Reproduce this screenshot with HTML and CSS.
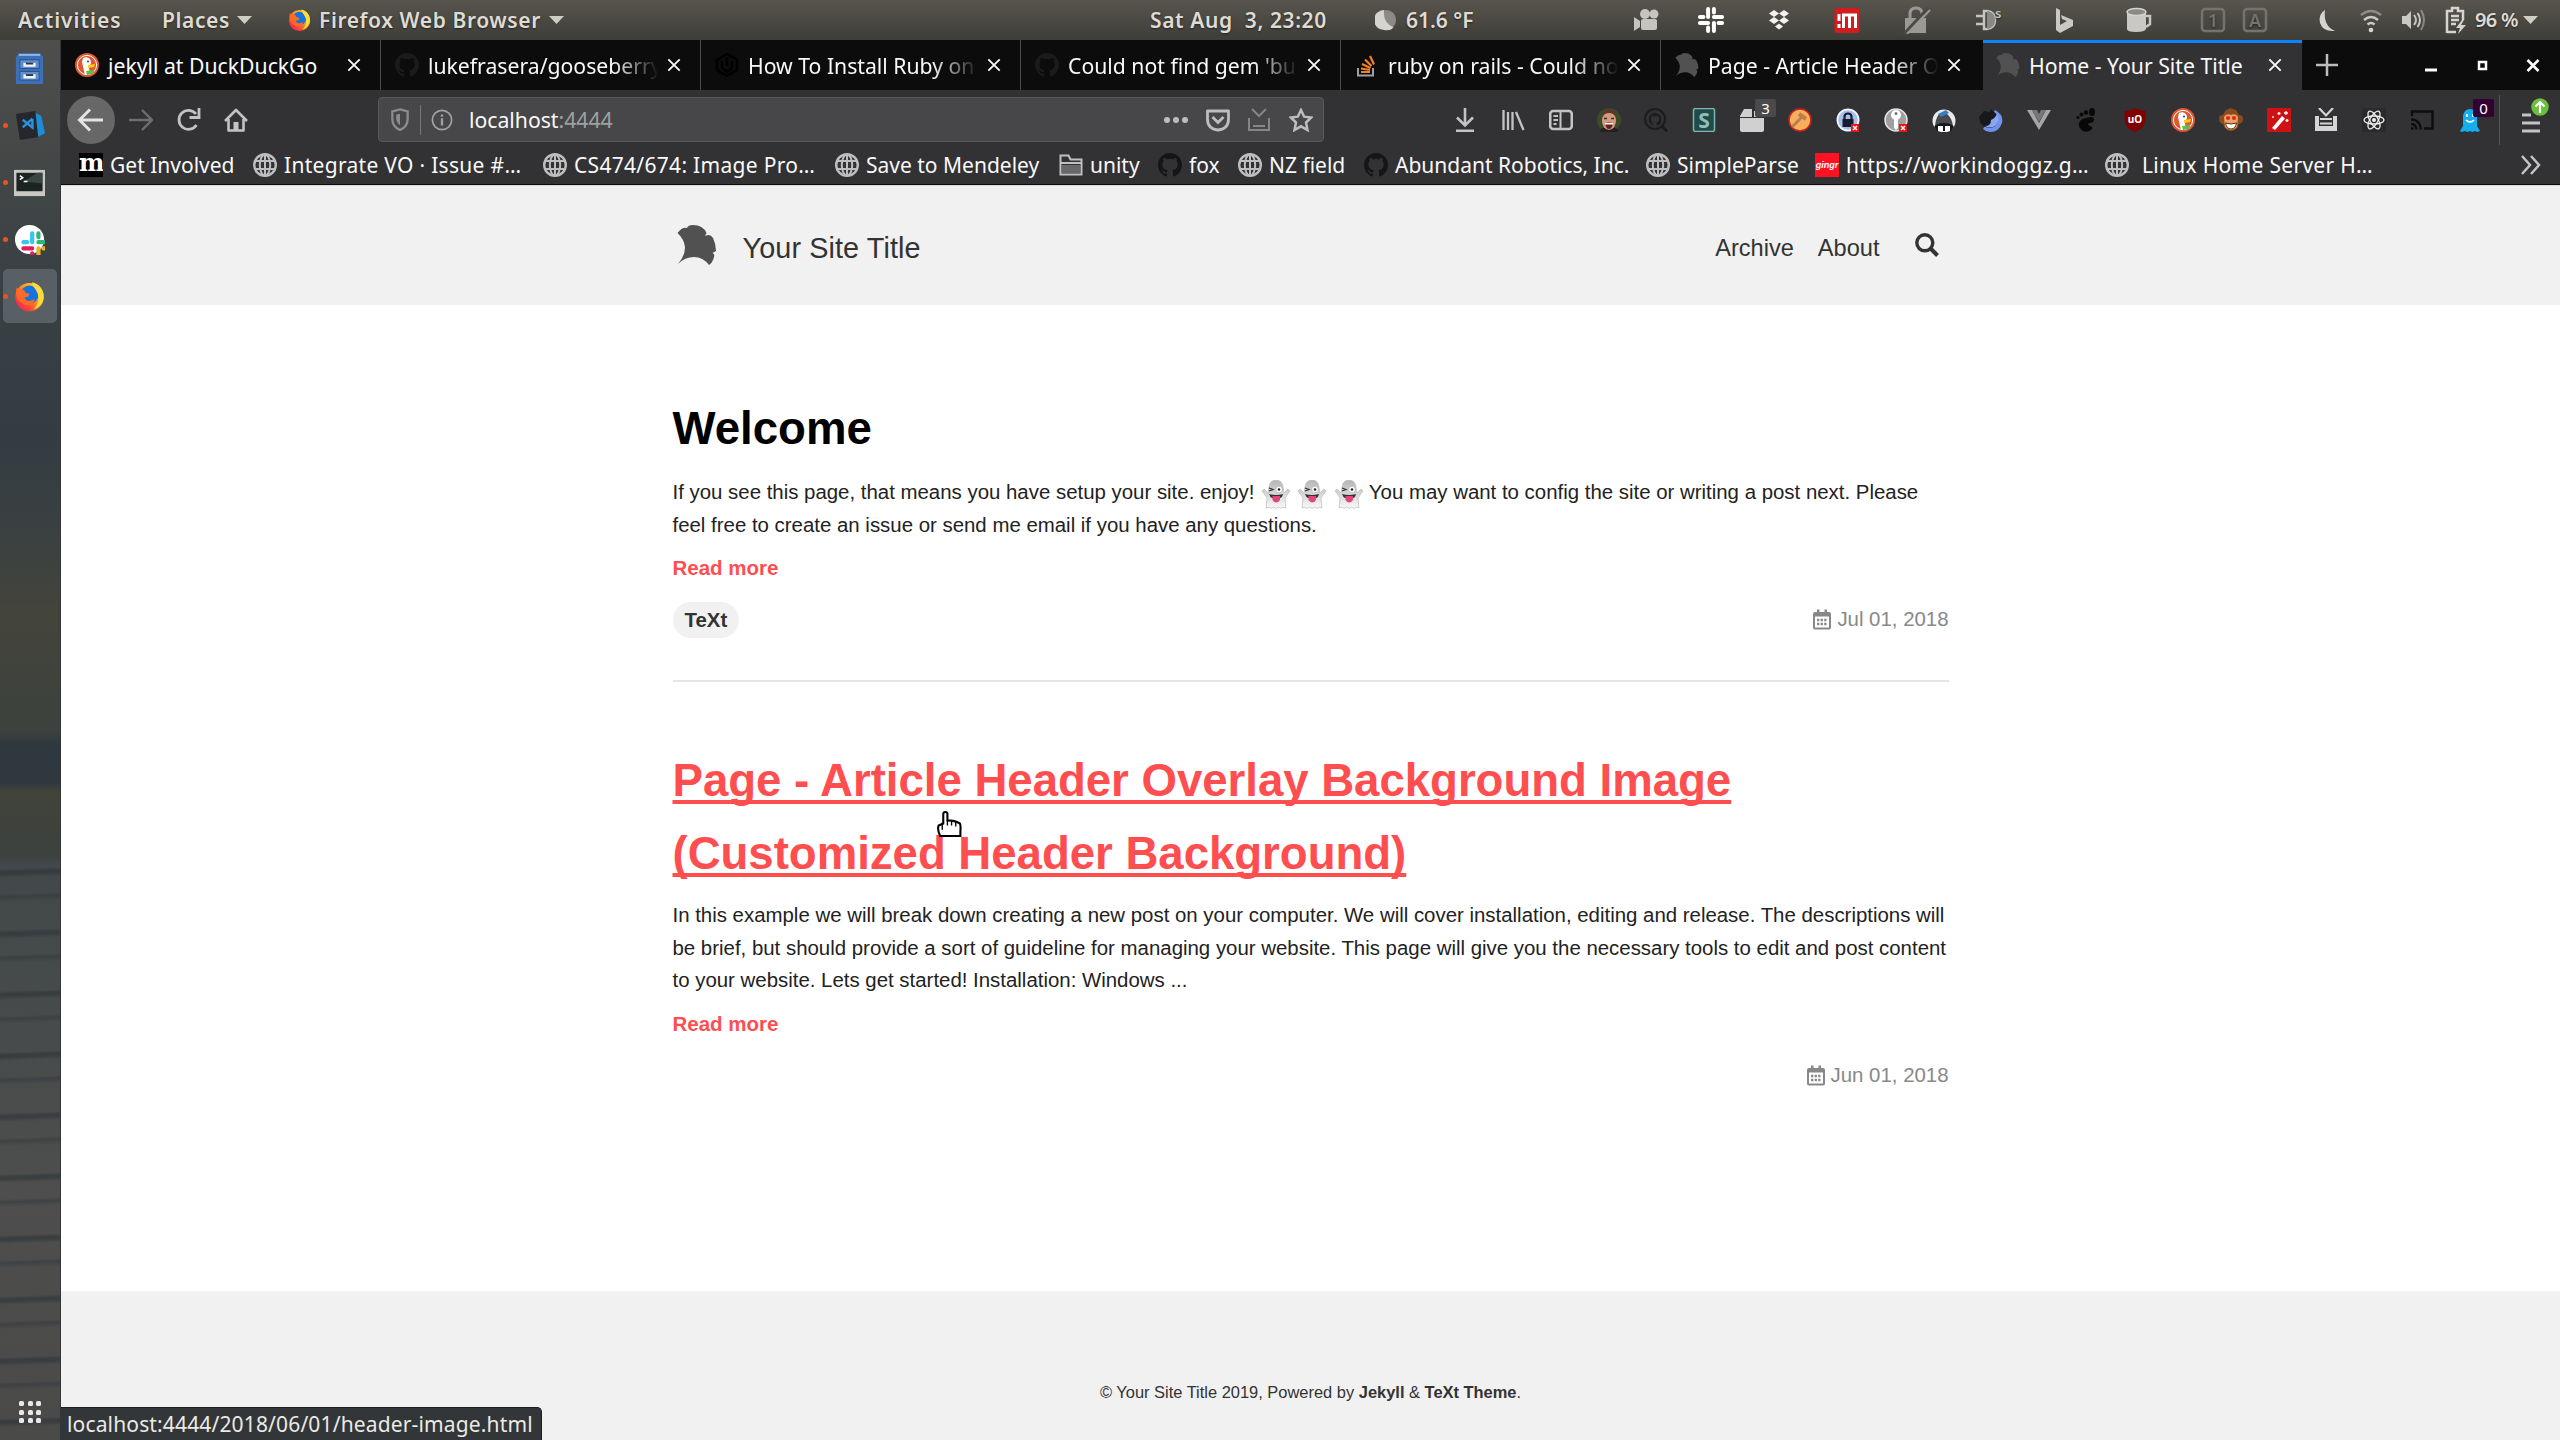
FILE: index.html
```html
<!DOCTYPE html>
<html lang="en">
<head>
<meta charset="utf-8">
<title>Home - Your Site Title</title>
<link rel="stylesheet" href="styles.css">
</head>
<body>
<svg class="defs" aria-hidden="true">
  <defs>
    <linearGradient id="ffx" x1="1" y1="0" x2="0" y2="1"><stop offset="0" stop-color="#fff44f"/><stop offset=".4" stop-color="#ff9a1e"/><stop offset=".75" stop-color="#ff3b3b"/><stop offset="1" stop-color="#e3138a"/></linearGradient>
    <linearGradient id="ghostg" x1="0" y1="0" x2="0" y2="1"><stop offset="0" stop-color="#b5b5b5"/><stop offset="1" stop-color="#fafafa"/></linearGradient>
    <symbol id="firefox" viewBox="0 0 24 24"><circle cx="12" cy="12.5" r="11" fill="url(#ffx)"/><circle cx="12" cy="10.5" r="7" fill="#1573dd"/><path d="M14 1c5 1 9 5 9 11 0 4-3 9-8 10 4-4 5-9 3-13-1-3-4-5-4-8z" fill="#ffdc3a"/><path d="M2 5l3 2c2-1 3 0 4 2l3 1-1 2-3 1c1 3 5 3 8 1-1 5-6 6-10 3-4-2-5-7-4-12z" fill="#ff6a26"/></symbol>
    <symbol id="ddg" viewBox="0 0 24 24"><circle cx="12" cy="12" r="12" fill="#de5833"/><circle cx="12" cy="12" r="9.6" fill="none" stroke="#fff" stroke-width="1"/><path d="M8 5c4-2 8 0 8 5l-2 5 1 7h-5L7 9z" fill="#fff"/><path d="M13 12l7-1-1 3-6 1z" fill="#fdd20a"/><circle cx="13" cy="8.5" r="1.1" fill="#2d4f8e"/><path d="M11 18l8-1v4l-7 1z" fill="#65bc46"/></symbol>
    <symbol id="github" viewBox="0 0 16 16"><path fill="currentColor" d="M8 0C3.58 0 0 3.58 0 8c0 3.54 2.29 6.53 5.47 7.59.4.07.55-.17.55-.38v-1.49c-2.01.37-2.53-.49-2.69-.94-.09-.23-.48-.94-.82-1.13-.28-.15-.68-.52-.01-.53.63-.01 1.08.58 1.23.82.72 1.21 1.87.87 2.33.66.07-.52.28-.87.51-1.07-1.78-.2-3.64-.89-3.64-3.95 0-.87.31-1.59.82-2.15-.08-.2-.36-1.02.08-2.12 0 0 .67-.21 2.2.82a7.6 7.6 0 014 0c1.53-1.04 2.2-.82 2.2-.82.44 1.1.16 1.92.08 2.12.51.56.82 1.27.82 2.15 0 3.07-1.87 3.75-3.65 3.95.29.25.54.73.54 1.48v2.2c0 .21.15.46.55.38A8 8 0 0016 8c0-4.42-3.58-8-8-8z"/></symbol>
    <symbol id="globe" viewBox="0 0 24 24"><g fill="none" stroke="#bebec0" stroke-width="2"><circle cx="12" cy="12" r="10.800" stroke-width="2.400"/><ellipse cx="12" cy="12" rx="5.200" ry="10.500"/><path d="M12 1v22M2.500 8h19M2.500 16h19"/></g></symbol>
    <symbol id="leaf" viewBox="0 0 40 40"><path fill="currentColor" d="M.5 8Q5 2 10 3Q11 0 16 0Q26 0 29.500 8L28 11Q33 8 36 13Q39 19 39 26L35.500 28Q38 29 37 32Q36 37 32 40Q26 32 17 32Q8 32 1 39Q8 31 8 22Q7 14 .5 8z"/></symbol>
    <symbol id="close" viewBox="0 0 16 16"><path d="M1.500 1.500l13 13M14.500 1.500l-13 13" stroke="#f9f9fa" stroke-width="2.200" fill="none"/></symbol>
    <symbol id="ghost" viewBox="0 0 30 30"><path d="M5 28l1-10-5-7 2-2 4 4 1-6q1-7 7-7t7 7l1 6 4-4 2 2-5 7 1 10-3-1-2 1.500-2.500-1.500-2.500 1.500-2.500-1.500-2.500 1.500-2-1.500z" fill="url(#ghostg)" stroke="#bbb" stroke-width=".7"/><circle cx="18" cy="9.500" r="3.300" fill="#fff" stroke="#888" stroke-width=".4"/><circle cx="18" cy="9.500" r="1.300" fill="#222"/><path d="M8 8l4 1.500-4 1.500" fill="none" stroke="#333" stroke-width="1.200"/><path d="M8 14q7 2 14 0-1 4-3 4h-8q-2-1-3-4z" fill="#333"/><path d="M11.500 16h7.500v4q-3.800 5-7.500 0z" fill="#e0457b"/></symbol>
    <symbol id="calendar" viewBox="0 0 18 20"><path fill="#888" fill-rule="evenodd" d="M4 0h2.500v2.500h5V0H14v2.500h2q2 0 2 2V18q0 2-2 2H2q-2 0-2-2V4.500q0-2 2-2h2zM2 7v11h14V7z"/><path stroke="#888" stroke-width="2.300" stroke-dasharray="2.300 1.300" d="M4 10.500h10M4 14.500h10"/></symbol>
    <symbol id="slackmark" viewBox="0 0 24 24"><g fill="none" stroke-width="3.400" stroke-linecap="round"><path d="M9.500 2.500v7M2.500 9.500h3" stroke="var(--a)"/><path d="M14.500 9.500h7M14.500 2.500v3" stroke="var(--b)"/><path d="M14.500 14.500v7M18.500 14.500h3" stroke="var(--c)"/><path d="M2.500 14.500h7M9.500 18.500v3" stroke="var(--d)"/></g></symbol>
  </defs>
</svg>

<header class="topbar">
  <span class="t-activities">Activities</span>
  <span>Places</span>
  <svg class="tri" viewBox="0 0 15 8"><path d="M0 0h15L7.500 8z"/></svg>
  <svg class="i23"><use href="#firefox"/></svg>
  <span class="t-app">Firefox Web Browser</span>
  <svg class="tri" viewBox="0 0 15 8"><path d="M0 0h15L7.500 8z"/></svg>
  <span class="t-clock">Sat Aug &nbsp;3, 23:20</span>
  <svg class="i22" viewBox="0 0 24 24"><circle cx="12" cy="12" r="11" fill="#8b8a85"/><path d="M10 1a11 11 0 100 22q8 1 10-3-12-6-10-19z" fill="#d5d4d0"/></svg>
  <span class="t-temp">61.6 °F</span>
  <svg class="i28" viewBox="0 0 28 28"><g fill="#c5c4c0"><circle cx="13" cy="8" r="5"/><circle cx="22" cy="8" r="4.500"/><rect x="9" y="13" width="16" height="11" rx="2"/><path d="M2 11l6 4v6l-6 4z"/></g></svg>
  <svg class="i28 slack-mono" viewBox="0 0 24 24"><use href="#slackmark"/></svg>
  <svg class="i28" viewBox="0 0 28 28"><path fill="#f2f2f0" d="M9 4l5 3.500L9 11 4 7.500zM19 4l5 3.500-5 3.500-5-3.500zM9 11l5 3.500L9 18l-5-3.500zM19 11l5 3.500-5 3.500-5-3.500zM14 17.500l4 3-4 3-4-3z"/></svg>
  <svg class="i28" viewBox="0 0 28 28"><rect x="1.500" y="2" width="25" height="25" rx="3" fill="#d31c1c"/><path d="M6 8v7M6 18v4M10.500 22V9h12v13M16.500 9v13" stroke="#fff" stroke-width="3" fill="none"/></svg>
  <svg class="i28" viewBox="0 0 28 28"><path d="M7 12V8q0-6 6-6t6 6v4" stroke="#9a9994" stroke-width="3" fill="none"/><path d="M2 12h21v15H2z" fill="#9a9994"/><path d="M1 28L25 2" stroke="#4c4a44" stroke-width="3"/><path d="M4 28L27 4" stroke="#9a9994" stroke-width="2"/></svg>
  <svg class="i28" viewBox="0 0 28 28"><path d="M9 5h3q8 1 8 9t-8 9H9zM1 10h7M1 18h7" stroke="#c5c4c0" stroke-width="2.500" fill="none"/><path d="M12 5q8 1 8 9t-8 9z" fill="#8a8984"/><text x="20" y="12" font-size="13" fill="#c5c4c0">s</text></svg>
  <svg class="i28" viewBox="0 0 28 28"><path d="M6 2l4 2v15l7-4-5-2-1-4 12 5v6L10 27l-4-3z" fill="#c9c8c4"/></svg>
  <svg class="i28" viewBox="0 0 28 28"><path d="M3 6v17q0 3 9 3t10-3V6z" fill="#c9c8c4"/><ellipse cx="12.500" cy="6" rx="9.500" ry="3.500" fill="#8a8984" stroke="#d5d4d0" stroke-width="1.500"/><path d="M22 10h4v8l-4 3" stroke="#c9c8c4" stroke-width="2.500" fill="none"/></svg>
  <svg class="i28 keylock" viewBox="0 0 28 28"><rect x="3" y="3" width="22" height="22" rx="3"/><text x="14" y="21" text-anchor="middle">1</text></svg>
  <svg class="i28 keylock" viewBox="0 0 28 28"><rect x="3" y="3" width="22" height="22" rx="3"/><text x="14" y="21" text-anchor="middle">A</text></svg>
  <svg class="i28" viewBox="0 0 28 28"><path d="M12 4q-7 4-5 13 3 9 15 8-12-5-10-21z" fill="#d5d4d0"/></svg>
  <svg class="i28" viewBox="0 0 28 28"><g fill="none" stroke="#c9c8c4" stroke-width="2.500"><path d="M4 9q10-8 20 0" opacity=".5"/><path d="M7 14q7-6 14 0"/><path d="M10.500 18.500q3.500-3 7 0"/></g><circle cx="14" cy="24" r="2.300" fill="#d5d4d0"/></svg>
  <svg class="i28" viewBox="0 0 28 28"><path d="M3 10h4l5-5v18l-5-5H3z" fill="#c9c8c4"/><g fill="none" stroke="#c9c8c4" stroke-width="2"><path d="M15 9q4 5 0 10"/><path d="M18.500 7q5 7 0 14"/><path d="M22 4q6 10 0 20" opacity=".5"/></g></svg>
  <svg class="i28" viewBox="0 0 28 28"><path d="M5 27V5h5V2h6v3h5v9M5 26h9M9 10h8M9 14h8M9 18h5" stroke="#d5d4d0" stroke-width="2.500" fill="none"/><path d="M20 14l-6 8h4l-2 6 8-9h-5l3-5z" fill="#d5d4d0"/></svg>
  <span class="t-batt">96 %</span>
  <svg class="tri" viewBox="0 0 15 8"><path d="M0 0h15L7.500 8z"/></svg>
</header>

<div class="desktop">
  <aside class="dock">
    <div class="dock-item"><svg viewBox="0 0 32 32"><path d="M2 4l3-4h22l3 4v28H2z" fill="#3f6fb5"/><path d="M5 2h22" stroke="#8fb5ea" stroke-width="2"/><path d="M6 7h20v9H6zM6 19h20v9H6z" fill="#5d8ed2" stroke="#2a4f8d"/><path d="M11 10v3h10v-3M11 22v3h10v-3" stroke="#f3f3f3" stroke-width="2.500" fill="#333"/></svg></div>
    <div class="dock-item running"><svg viewBox="0 0 32 32"><path d="M20 2l8 4 4 18-8 4z" fill="#1b8ddd"/><path d="M2 4l20-3 3 27-19 3z" fill="#25272c"/><path d="M19 9l-10 9M9 10l10 8V9" stroke="#2794df" stroke-width="2.500" fill="none"/></svg></div>
    <div class="dock-item running"><svg viewBox="0 0 32 32"><rect x="0" y="3" width="32" height="27" fill="#c9c7c3"/><rect x="2.500" y="6" width="27" height="19" fill="#1c2422"/><path d="M10 15L24 6h5v11z" fill="#3b4643"/><path d="M6 9l3 2-3 2M10 15h4" stroke="#fff" stroke-width="1.500" fill="none"/></svg></div>
    <div class="dock-item running"><svg viewBox="0 0 32 32"><circle cx="16" cy="16" r="15" fill="#fff"/><svg class="slack-color" x="6.500" y="6.500" width="19" height="19" viewBox="0 0 24 24"><use href="#slackmark"/></svg></svg></div>
    <div class="dock-item running current"><svg><use href="#firefox"/></svg></div>
    <div class="apps"><i></i><i></i><i></i><i></i><i></i><i></i><i></i><i></i><i></i></div>
  </aside>

  <section class="browser">
    <nav class="tabs">
      <div class="tab"><svg class="fav"><use href="#ddg"/></svg><span>jekyll at DuckDuckGo</span><svg class="x"><use href="#close"/></svg></div>
      <div class="tab"><svg class="fav dim"><use href="#github"/></svg><span>lukefrasera/gooseberry</span><svg class="x"><use href="#close"/></svg></div>
      <div class="tab"><svg class="fav" viewBox="0 0 24 24"><path d="M12 1l10 6v10l-10 6-10-6V7zM12 4v9M7 8v7l5 4 5-4V8" fill="none" stroke="#000" stroke-width="2.500"/></svg><span>How To Install Ruby on</span><svg class="x"><use href="#close"/></svg></div>
      <div class="tab"><svg class="fav dim"><use href="#github"/></svg><span>Could not find gem 'bun</span><svg class="x"><use href="#close"/></svg></div>
      <div class="tab so"><svg class="fav" viewBox="0 0 24 24"><path d="M3 15v7.500h15V15" stroke="#9aa0a6" stroke-width="2" fill="none"/><path d="M6 19h9M6 15.500l9 1.500M7 11l8.500 4M10 6.500l6.500 6.500M15 3l4 8.500" stroke="#f48024" stroke-width="2.200"/></svg><span>ruby on rails - Could not</span><svg class="x"><use href="#close"/></svg></div>
      <div class="tab"><svg class="fav leaf"><use href="#leaf"/></svg><span>Page - Article Header O</span><svg class="x"><use href="#close"/></svg></div>
      <div class="tab active"><svg class="fav leaf"><use href="#leaf"/></svg><span>Home - Your Site Title</span><svg class="x"><use href="#close"/></svg></div>
      <svg class="newtab" viewBox="0 0 22 22"><path d="M11 0v22M0 11h22" stroke="#bcbcbd" stroke-width="2.500"/></svg>
      <div class="winctl">
        <svg viewBox="0 0 14 14"><path d="M1 12h12" stroke="#fff" stroke-width="3"/></svg>
        <svg viewBox="0 0 14 14"><path d="M4 4h7v7H4z" stroke="#fff" stroke-width="2.500" fill="none"/></svg>
        <svg viewBox="0 0 14 14"><path d="M1.500 2l11 11M12.500 2l-11 11" stroke="#fff" stroke-width="2.600"/></svg>
      </div>
    </nav>

    <div class="toolbar">
      <div class="navbtns">
        <svg class="back" viewBox="0 0 48 48"><circle cx="24" cy="24" r="24" fill="#676767"/><path d="M36 24H13M23 13.500L12.500 24 23 34.500" stroke="#e3e3e3" stroke-width="3" fill="none"/></svg>
        <svg viewBox="0 0 24 24"><path d="M0 12h23M13 2l10 10-10 10" stroke="#6e6e70" stroke-width="2.400" fill="none"/></svg>
        <svg viewBox="0 0 24 24"><path d="M19.500 17A9.500 9.500 0 1119 6" stroke="#c3c3c4" stroke-width="2.800" fill="none"/><path d="M22 0v9.500h-9.500" fill="none" stroke="#c3c3c4" stroke-width="2.800"/></svg>
        <svg viewBox="0 0 24 24"><path d="M1 13L12 2l11 11M4.500 11v11.500h15V11" stroke="#c3c3c4" stroke-width="2.600" fill="none" stroke-linejoin="round"/><path d="M9.500 23v-9h5v9z" fill="#c3c3c4"/></svg>
      </div>
      <div class="urlbar">
        <svg class="shield" viewBox="0 0 20 24"><path d="M10 1.500l8 2v8q0 8-8 11.500-8-3.500-8-11.500v-8z" fill="none" stroke="#8c8c8e" stroke-width="2.400"/><path d="M10 6v12q-4-3-4-7V7z" fill="#8c8c8e"/></svg>
        <i class="vsep"></i>
        <svg class="info" viewBox="0 0 24 24"><circle cx="12" cy="12" r="10.500" fill="none" stroke="#a2a2a4" stroke-width="1.800"/><path d="M12 10v8M12 6v2.500" stroke="#a2a2a4" stroke-width="2.500"/></svg>
        <span class="url">localhost<em>:4444</em></span>
        <svg class="act" viewBox="0 0 24 24"><g fill="#bdbdbe"><circle cx="3" cy="12" r="3"/><circle cx="12" cy="12" r="3"/><circle cx="21" cy="12" r="3"/></g></svg>
        <svg class="act" viewBox="0 0 24 24"><path d="M1.500 3h21v8q0 10-10.500 11Q1.500 21 1.500 11z" fill="none" stroke="#bdbdbe" stroke-width="2.800" stroke-linejoin="round"/><path d="M6.500 9l5.500 5.500L17.500 9" fill="none" stroke="#bdbdbe" stroke-width="2.800"/></svg>
        <svg class="act" viewBox="0 0 24 24"><path d="M5 1l7 7 7-7M2 10v12h20V10M6 18h12" fill="none" stroke="#858587" stroke-width="2"/></svg>
        <svg class="act" viewBox="0 0 24 24"><path d="M12 2l3.200 6.700 7 .8-5.200 5 1.500 7.500-6.500-3.700L5.500 22 7 14.500l-5.200-5 7-.8z" fill="none" stroke="#bdbdbe" stroke-width="2.500"/></svg>
      </div>
      <div class="exts">
        <svg viewBox="0 0 24 24"><path d="M12 0v17M4 9.500l8 8 8-8M3 22.700h18" fill="none" stroke="#c3c3c4" stroke-width="2.600"/></svg>
        <svg viewBox="0 0 24 24"><path d="M2.500 2v20M7 4v18M11.500 4v18M15 4l7.500 18" fill="none" stroke="#c3c3c4" stroke-width="2.300"/></svg>
        <svg viewBox="0 0 24 24"><rect x="1.200" y="3" width="21.600" height="18" rx="3" fill="none" stroke="#c3c3c4" stroke-width="2.600"/><path d="M11.500 3v18M4.500 8h4.500M4.500 12h4.500M4.500 16h3" stroke="#c3c3c4" stroke-width="2"/></svg>
        <svg viewBox="0 0 24 24"><circle cx="12" cy="12" r="12" fill="#3d4a2b"/><path d="M3 24q0-4 6-5h6q7 1 6 5z" fill="#27221f"/><ellipse cx="12" cy="12.500" rx="7" ry="9.500" fill="#d39a80"/><path d="M5 10q0-9 7-9t7 9q-2-5-7-5t-7 5z" fill="#5b3826"/><path d="M8 15q4-1 8 0-1 6-4 6t-4-6z" fill="#6b1c1c"/><path d="M8 15h8v1.500H8z" fill="#fff"/><path d="M7 10.500h3M14 10.500h3" stroke="#333" stroke-width="1.300"/></svg>
        <svg class="ghs" viewBox="0 0 24 24"><circle cx="11" cy="11" r="10" fill="none" stroke="#1c1c1d" stroke-width="2"/><path d="M18 18l5 5.500" stroke="#1c1c1d" stroke-width="3"/><svg x="4.500" y="5" width="13" height="13"><use href="#github"/></svg></svg>
        <svg viewBox="0 0 24 24"><rect x="1.500" y=".5" width="21" height="23" rx="2" fill="#1f4b4b" stroke="#7fb3ab" stroke-width="1.500"/><text x="12" y="20" text-anchor="middle" font-size="21" font-weight="700" fill="#8fc1b7">S</text></svg>
        <div class="badged"><svg viewBox="0 0 24 24"><path d="M0 10h24v12q0 2-2 2H2q-2 0-2-2zM4 1h8v8H0V8zM14 3h7l3 5v1H14z" fill="#d0d0d0"/></svg><b>3</b></div>
        <svg viewBox="0 0 24 24"><circle cx="12" cy="12" r="11" fill="#f8ae5c" stroke="#c9231b" stroke-width="1.600"/><path d="M4 19L15 8" stroke="#b87f4a" stroke-width="3"/><path d="M11 6l7 5" stroke="#b87f4a" stroke-width="4"/></svg>
        <svg viewBox="0 0 24 24"><circle cx="12" cy="12" r="11.500" fill="#a9bfe8"/><circle cx="12" cy="12" r="10.500" fill="none" stroke="#f5f7fc" stroke-width="1.500"/><path d="M8.500 12V9q0-3.500 3.500-3.500T15.500 9v3" stroke="#141b33" stroke-width="2.200" fill="none"/><path d="M6.500 11h11v8h-11z" fill="#141b33"/><path d="M15 16h8v8h-8z" fill="#e11"/><path d="M17 18l4 4M21 18l-4 4" stroke="#fff" stroke-width="1.500"/></svg>
        <svg viewBox="0 0 24 24"><circle cx="12" cy="12" r="11" fill="#9f9f9f" stroke="#e2e2e2" stroke-width="1.500"/><circle cx="12" cy="7" r="5" fill="#fff"/><circle cx="12" cy="5.500" r="1.500" fill="#777"/><path d="M10 11h4v9l-2 2-2-2z" fill="#fff"/><path d="M15 16h8v8h-8z" fill="#e11"/><path d="M17 18l4 4M21 18l-4 4" stroke="#fff" stroke-width="1.500"/></svg>
        <svg viewBox="0 0 24 24"><circle cx="12" cy="13" r="11.500" fill="#e9eaeb"/><path d="M3 18Q4 7 9 5l6 1q5 4 6 12z" fill="#474b50"/><path d="M6 6l8-4 3 3-8 4z" fill="#3b7bbf"/><path d="M2 19q3-4 10-4t10 4l-3 4H5z" fill="#15181b"/><path d="M6 18h5v5H6zM13 18h5v5h-5z" fill="#fff"/></svg>
        <svg viewBox="0 0 24 24"><path d="M16 2q9 5 7 13-3 9-12 9-4 0-7-3z" fill="#6f93ee"/><path d="M0 9l5-6 6 1 1-3 3 3q5 3 4 8-1 7-8 8Q1 20 0 9z" fill="#17181c"/><path d="M12 12q5-2 6-7 4 8-2 13-5 3-10 0 6 0 6-6z" fill="#89a6f0"/></svg>
        <svg viewBox="0 0 24 24"><path d="M0 2h5l7 13 7-13h5L12 22z" fill="#a6a6a8"/><path d="M5 2h5l2 4 2-4h5l-7 12z" fill="#77777a"/></svg>
        <svg viewBox="0 0 24 24"><path d="M11 10q8-3 8 2 0 3-5 3-2 2 1 3 4 1 1 4-4 3-8 1-5-3-4-8 1-4 7-5z" fill="#080808"/><ellipse cx="17" cy="4" rx="3" ry="4" fill="#080808"/><circle cx="11" cy="4.500" r="2.200" fill="#080808"/><circle cx="6.500" cy="6.500" r="1.900" fill="#080808"/><circle cx="3" cy="9.500" r="1.600" fill="#080808"/></svg>
        <svg viewBox="0 0 24 24"><path d="M12 0q5 3 10.500 3v8q0 9-10.500 13Q1.500 20 1.500 11V3Q7 3 12 0z" fill="#800000"/><text x="12" y="15" text-anchor="middle" font-size="10" font-weight="700" fill="#fff">uO</text></svg>
        <svg><use href="#ddg"/></svg>
        <svg viewBox="0 0 24 24"><path d="M6 3l5-3 6 2 3 5q4 0 4 4t-4 5q-2 7-8 7t-8-7q-4-1-4-5t4-4z" fill="#8a4b1e"/><path d="M5 9q2-4 7-2 5-2 7 2l-1 10q-6 6-12 0z" fill="#e9a565"/><circle cx="9" cy="10" r="2" fill="#e3231b"/><circle cx="15" cy="10" r="2" fill="#e3231b"/><path d="M6.500 15q5.500 2 11 0-1 6-5.500 6t-5.500-6z" fill="#fff" stroke="#5b2d0d"/></svg>
        <svg viewBox="0 0 24 24"><rect width="24" height="24" fill="#cf1111"/><path d="M5 20L15 8l3 2.500L8 22z" fill="#fff"/><path d="M12 4v3M10.500 5.500h3M19 3v4M17 5h4M20 11v3M18.500 12.500h3M6 8v2" stroke="#fff" stroke-width="1.300"/></svg>
        <svg viewBox="0 0 24 24"><path d="M5 0l7 7.500L19 0" fill="none" stroke="#d5d5d5" stroke-width="2.200"/><path d="M1 8h4v10h14V8h4v15H1z" fill="#d5d5d5"/><path d="M6 11h12M6 15.500h12" stroke="#d5d5d5" stroke-width="2.200"/></svg>
        <svg viewBox="0 0 24 24"><rect width="24" height="24" fill="#2a2a2b"/><g fill="none" stroke="#f0f0f0" stroke-width="1.300"><ellipse cx="12" cy="12" rx="10" ry="4"/><ellipse cx="12" cy="12" rx="10" ry="4" transform="rotate(60 12 12)"/><ellipse cx="12" cy="12" rx="10" ry="4" transform="rotate(120 12 12)"/></g><circle cx="12" cy="12" r="2" fill="#f0f0f0"/></svg>
        <svg viewBox="0 0 24 24"><path d="M2 8V3.500h20.500v17H14M1 20.500h2.500M1 16q5 0 5.500 5.500M1 11.500q9 0 10 10" fill="none" stroke="#0c0c0d" stroke-width="2.300"/></svg>
        <div class="badged purple"><svg viewBox="0 0 24 24"><path d="M5 8q1-7 7-7t7 7v10l3 5-3 1-2-1-2.500 1-2.500-1-2.500 1L7 23l-3 1-2-1 3-5z" fill="#14adee"/><path d="M9 6v3M15 6v3M8 12q4 4 8 0" stroke="#fff" stroke-width="1.700" fill="none"/></svg><b>0</b></div>
      </div>
      <div class="menu">
        <svg viewBox="0 0 36 44"><path d="M9 20h9M9 28h18M9 36h18" stroke="#c3c3c4" stroke-width="2.800"/><circle cx="27" cy="12" r="9.500" fill="#6cbf3c" stroke="#323234" stroke-width="1.500"/><path d="M27 18V7.500M22.500 11.500L27 7l4.500 4.500" stroke="#fff" stroke-width="2.200" fill="none"/></svg>
      </div>
    </div>

    <nav class="bookmarks">
      <a><i class="moz">m</i><span>Get Involved</span></a>
      <a class="cut"><svg><use href="#globe"/></svg><span>Integrate VO · Issue #…</span></a>
      <a class="cut"><svg><use href="#globe"/></svg><span>CS474/674: Image Pro…</span></a>
      <a><svg><use href="#globe"/></svg><span>Save to Mendeley</span></a>
      <a><svg viewBox="0 0 24 24"><path d="M1.500 21.500v-19h8l2 4h11v15zM1.500 10h21" fill="none" stroke="#c0c0c2" stroke-width="2"/><path d="M3 12h18v8H3z" fill="#68686a"/></svg><span>unity</span></a>
      <a><svg class="gh"><use href="#github"/></svg><span>fox</span></a>
      <a><svg><use href="#globe"/></svg><span>NZ field</span></a>
      <a><svg class="gh"><use href="#github"/></svg><span>Abundant Robotics, Inc.</span></a>
      <a><svg><use href="#globe"/></svg><span>SimpleParse</span></a>
      <a class="cut"><i class="gingr">gingr</i><span>https://workindoggz.g…</span></a>
      <a class="cut wide"><svg><use href="#globe"/></svg><span>Linux Home Server H…</span></a>
      <svg class="more" viewBox="0 0 20 20"><path d="M1 1l8 9-8 9M10 1l8 9-8 9" fill="none" stroke="#c3c3c4" stroke-width="2.500"/></svg>
    </nav>

    <main class="page">
      <div class="site-header">
        <div class="wrap">
          <svg class="logo"><use href="#leaf"/></svg>
          <span class="site-title">Your Site Title</span>
          <nav><a>Archive</a><a>About</a></nav>
          <svg class="search" viewBox="0 0 24 24"><circle cx="9.800" cy="9.800" r="8" fill="none" stroke="#333" stroke-width="3.400"/><path d="M15.500 15.500l7 7" stroke="#333" stroke-width="4"/></svg>
        </div>
      </div>
      <div class="posts wrap-col">
        <article class="first">
          <h2>Welcome</h2>
          <p>If you see this page, that means you have setup your site. enjoy! <svg class="ghost"><use href="#ghost"/></svg> <svg class="ghost"><use href="#ghost"/></svg> <svg class="ghost"><use href="#ghost"/></svg> You may want to config the site or writing a post next. Please<br>feel free to create an issue or send me email if you have any questions.</p>
          <a class="read">Read more</a>
          <div class="meta"><span class="tag">TeXt</span><span class="date"><svg><use href="#calendar"/></svg>Jul 01, 2018</span></div>
        </article>
        <article>
          <h2 class="hover"><span>Page - Article Header Overlay Background Image<br>(Customized Header Background)</span></h2>
          <p>In this example we will break down creating a new post on your computer. We will cover installation, editing and release. The descriptions will<br>be brief, but should provide a sort of guideline for managing your website. This page will give you the necessary tools to edit and post content<br>to your website. Lets get started! Installation: Windows ...</p>
          <a class="read">Read more</a>
          <div class="meta"><span class="date"><svg><use href="#calendar"/></svg>Jun 01, 2018</span></div>
        </article>
      </div>
      <footer>© Your Site Title 2019, Powered by <b>Jekyll</b> &amp; <b>TeXt Theme</b>.</footer>
    </main>
    <div class="status">localhost:4444/2018/06/01/header-image.html</div>
  </section>
</div>
<svg class="cursor" viewBox="0 0 24 26"><path d="M6 12V3q0-2 2-2t2 2v6q7 0 12 3 1 2 .5 7v5H3q-3-6-1.500-10z" fill="#fff" stroke="#000" stroke-width="2"/><path d="M10 9v5M14 10v4M18 11v4M5 11v7" stroke="#000" stroke-width="1.300"/></svg>
</body>
</html>
```
FILE: styles.css
```css
* { box-sizing: border-box; }
body { margin: 0; width: 2560px; height: 1440px; overflow: hidden; font-family: "Noto Sans", sans-serif; background: #fff; }
svg { display: block; flex: none; }
i, em { font-style: normal; }
.defs { position: absolute; width: 0; height: 0; }

/* GNOME top bar */
.topbar {
  height: 40px; padding-left: 18px; display: grid; align-items: center;
  grid-template-columns: 144px 75px 51px 31px 230px 601px 225px 31px 226px 65px 68px 68px 70px 72px 75px 74px 75px 42px 72px 44px 42px 43px 33px 48px 20px;
  background: linear-gradient(#58554d, #3e3d38);
  color: #dfdbd2; font-size: 21px; font-weight: 600; letter-spacing: .6px; white-space: nowrap; text-shadow: 0 1px 2px #222;
}
.topbar span { line-height: 38px; }
.topbar .t-activities { letter-spacing: 1px; }
.topbar .t-temp { letter-spacing: 0; }
.topbar .t-batt { font-size: 20px; letter-spacing: -.7px; }
.tri { width: 15px; height: 8px; fill: #cfccc4; }
.i22 { width: 22px; height: 22px; }
.i23 { width: 23px; height: 24px; }
.i28 { width: 28px; height: 28px; }
.slack-mono { --a: #fff; --b: #fff; --c: #fff; --d: #fff; }
.keylock rect { fill: none; stroke: #75736c; stroke-width: 2.5; }
.keylock text { fill: #75736c; font-size: 18px; letter-spacing: 0; }

.desktop { display: flex; height: 1400px; }

/* Dock */
.dock {
  width: 61px; display: flex; flex-direction: column; padding-top: 1px; border-right: 1px solid #33373a;
  background:
    repeating-linear-gradient(178deg, #0000 0 9px, #282f3580 12px 14px, #0000 18px 34px, #282f3560 37px, #0000 42px 61px) 0 100% / 61px 580px no-repeat,
    linear-gradient(#4e4f4d 0, #474948 90px, #3a4144 230px, #343c42 400px, #3b4141 500px, #43443a 570px, #3d423e 690px, #2f373f 706px, #2f373f 742px, #42443a 752px, #3c413e 815px, #424849 823px, #4d4e4d 1150px, #4a4a48 1400px);
}
.dock-item { position: relative; height: 54px; margin: 0 3px 3px; border-radius: 5px; display: grid; place-items: center; }
.dock-item svg { width: 31px; height: 31px; margin-right: 1px; }
.dock-item.current { background: #586066; }
.running::before { content: ""; position: absolute; left: 0; top: 25px; width: 5px; height: 5px; border-radius: 50%; background: #e95420; }
.slack-color { --a: #36c5f0; --b: #2eb67d; --c: #ecb22e; --d: #e01e5a; }
.apps { margin: auto auto 17px 19px; display: grid; grid-template-columns: repeat(3, 5px); gap: 3.500px; }
.apps i { height: 5px; border-radius: 1.500px; background: #e8e8e8; }

/* Browser chrome */
.browser { position: relative; flex: 1; display: flex; flex-direction: column; min-width: 0; }
.tabs { height: 50px; background: #0c0c0d; display: flex; align-items: center; }
.tab { width: 320px; height: 50px; flex: none; display: flex; align-items: center; padding-left: 14px; border-right: 1px solid #4c4c4d; color: #f9f9fa; font-size: 21.200px; }
.tab .fav { width: 24px; height: 24px; margin-right: 9px; }
.tab span { width: 232px; white-space: nowrap; -webkit-mask-image: linear-gradient(90deg, #000 185px, #0000 231px); mask-image: linear-gradient(90deg, #000 185px, #0000 231px); }
.tab:first-child span, .tab.active span { -webkit-mask-image: none; mask-image: none; }
.tab .x { width: 14px; height: 14px; margin-left: 7px; }
.tab:nth-child(6) { border-right: 0; }
.tab.active { background: #323234; border-top: 3px solid #0a84ff; border-right: 0; width: 319px; margin-left: 2px; margin-right: -1px; padding: 0 0 3px 13px; }
.dim { color: #1b1b1c; }
.fav.leaf { color: #515151; }
.newtab { width: 22px; height: 22px; margin-left: 15px; }
.winctl { margin-left: auto; margin-right: 20px; display: flex; gap: 37px; }
.winctl svg { width: 14px; height: 14px; }

.toolbar { height: 59px; background: #323234; display: flex; align-items: center; }
.navbtns { display: flex; align-items: center; width: 317px; padding-left: 6px; }
.navbtns svg { width: 24px; height: 24px; margin-right: 23.500px; }
.navbtns .back { width: 48px; height: 48px; margin-right: 14px; }
.urlbar { width: 946px; height: 45px; background: #474749; border: 1px solid #59595b; border-radius: 4px; display: flex; align-items: center; }
.shield { width: 20px; height: 23px; margin: 0 10px 0 11px; }
.vsep { width: 1px; height: 30px; background: #77777a; }
.info { width: 22px; height: 22px; margin-left: 10px; }
.url { margin: 0 auto 0 16px; font-size: 21.200px; color: #f9f9fa; }
.url em { color: #a0a0a2; }
.act { width: 24px; height: 24px; margin-right: 17.700px; }
.urlbar .act:last-child { margin-right: 10px; }
.exts { margin-left: 117px; width: 1053px; display: flex; justify-content: space-around; align-items: center; }
.exts > svg, .badged, .badged svg { width: 24px; height: 24px; }
.ghs { color: #1c1c1d; }
.badged { position: relative; }
.badged b { position: absolute; left: 15px; top: -9px; width: 21px; height: 18px; border-radius: 2px; background: #4a4a4c; color: #fff; font: 15px/18px "Noto Sans", sans-serif; text-align: center; }
.badged.purple b { background: #330033; }
.menu { margin-left: 5px; height: 50px; border-left: 1px solid #555557; padding: 0 0 0 13px; }
.menu svg { width: 36px; height: 44px; }

.bookmarks {
  height: 36px; background: #323234; border-bottom: 1px solid #0c0c0d; padding: 0 0 3px 18px; display: grid; align-items: center; color: #f9f9fa; font-size: 21px; white-space: nowrap;
  grid-template-columns: 174px 290px 292px 224px 99px 80px 126px 282px 169px 290px 416px 20px;
}
.bookmarks a { display: flex; align-items: center; }
.bookmarks a span { line-height: 30px; }
.bookmarks a svg, .bookmarks a i { width: 24px; height: 24px; margin-right: 7px; flex: none; }
.bookmarks .cut { letter-spacing: .3px; }
.bookmarks .wide svg { margin-right: 13px; }
.gh { color: #151516; }
.bookmarks .moz { background: #000; color: #fff; font: bold 24px/19px "DejaVu Serif", serif; text-align: center; letter-spacing: -1px; overflow: hidden; }
.bookmarks .gingr { background: #fc1222; color: #fff; font: italic bold 9px/24px "Liberation Sans", sans-serif; letter-spacing: 0; text-align: center; }
.more { width: 20px; height: 20px; }

/* Site */
.page { flex: 1; display: flex; flex-direction: column; background: #fff; font-family: "Liberation Sans", sans-serif; color: #222; }
.site-header { height: 120px; background: #f1f1f1; border-top: 1px solid #d8d8d8; }
.wrap { width: 1276px; margin: 0 auto; height: 120px; display: flex; align-items: center; color: #333; }
.logo { width: 40px; height: 40px; margin: -2px 26px 0 4px; color: #515151; }
.site-title { font-size: 28.800px; margin-top: 4px; letter-spacing: .1px; }
.wrap nav { margin-left: auto; display: flex; gap: 24px; font-size: 23.600px; margin-top: 4px; }
.search { width: 24px; height: 24px; margin: -2px 10px 0 35px; }
.wrap-col { width: 1276px; margin: 0 auto; }
.posts { flex: 1; padding-top: 87.500px; }
.posts h2 { margin: 0 0 10.500px; font-size: 45.600px; line-height: 72.800px; color: #000; white-space: nowrap; }
.posts h2.hover { color: #ff4e50; margin-bottom: 8.500px; letter-spacing: -.03px; }
.hover span { text-decoration: underline; text-decoration-thickness: 4px; text-underline-offset: 4px; text-decoration-skip-ink: none; }
.posts p { margin: 0; font-size: 20.420px; line-height: 32.700px; white-space: nowrap; }
.ghost { display: inline-block; width: 30px; height: 30px; margin: -6px 0 -6px .700px; vertical-align: -5px; }
.read { display: block; margin-top: 11px; font-size: 20.500px; line-height: 32.700px; font-weight: 700; color: #ff4e50; }
.meta { display: flex; justify-content: space-between; align-items: center; margin-top: 17px; height: 36px; color: #888; font-size: 20.400px; }
.tag { background: #f1f1f1; color: #333; font-weight: 700; border-radius: 18px; line-height: 36px; padding: 0 12px; }
.date { display: flex; align-items: center; margin-left: auto; }
.date svg { width: 18px; height: 21px; margin-right: 6px; }
.first { border-bottom: 2px solid #e6e6e6; padding-bottom: 42px; margin-bottom: 63px; }
footer { height: 149px; background: #f1f1f1; padding-top: 87px; text-align: center; font-size: 16.450px; line-height: 28px; color: #333; }

.status { position: absolute; left: 0; bottom: 0; height: 33px; width: 481px; padding-left: 6px; background: #323638; border: 1px solid #1c2021; border-left: 0; border-bottom: 0; border-top-right-radius: 5px; color: #eceae6; font-size: 21px; letter-spacing: .15px; line-height: 32px; white-space: nowrap; }
.cursor { position: absolute; left: 937px; top: 811px; width: 25px; height: 27px; }
```
